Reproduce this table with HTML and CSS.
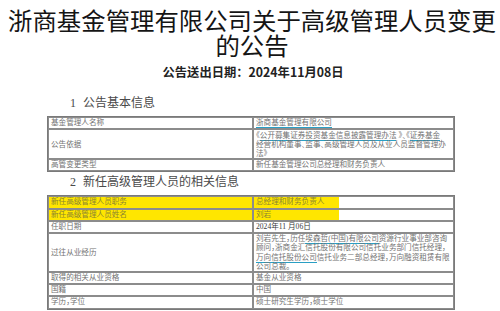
FILE: index.html
```html
<!DOCTYPE html>
<html lang="zh-CN">
<head>
<meta charset="utf-8">
<title>浙商基金管理有限公司关于高级管理人员变更的公告</title>
<link rel="stylesheet" href="styles.css">
</head>
<body>
<h1 class="title">浙商基金管理有限公司关于高级管理人员变更的公告</h1>
<p class="date">公告送出日期：2024年11月08日</p>

<section class="block">
  <h2 class="sec"><span class="num">1</span>公告基本信息</h2>
  <table class="grid">
    <colgroup><col class="c-label"><col></colgroup>
    <tr><td>基金管理人名称</td><td><span class="link">浙商基金管理有限公司</span></td></tr>
    <tr class="multi"><td>公告依据</td><td>《<span class="link">公开募集证券投资基金信息披露管理办法</span> 》、《<span class="link">证券基金</span><br>经营机构董事、监事、高级管理人员及从业人员监督管理办<br>法》</td></tr>
    <tr><td>高管变更类型</td><td>新任基金管理公司总经理和财务负责人</td></tr>
  </table>

  <h2 class="sec sec-2"><span class="num">2</span>新任高级管理人员的相关信息</h2>
  <table class="grid">
    <colgroup><col class="c-label"><col></colgroup>
    <tr class="hl"><td>新任高级管理人员职务</td><td class="hl-val"><div class="mark">总经理和财务负责人</div></td></tr>
    <tr class="hl"><td>新任高级管理人员姓名</td><td class="hl-val"><div class="mark">刘岩</div></td></tr>
    <tr><td>任职日期</td><td class="dark">2024年11 月06日</td></tr>
    <tr class="exp"><td>过往从业经历</td><td>刘岩先生，历任<span class="link">埃森哲(中国)有限公司</span>资源行业事业部咨询<br>顾问，浙商金汇信托股份有限公司信托业务部门信托经理，<br><span class="link">万向信托股份公司</span>信托业务二部总经理，万向融资租赁有限<br>公司总裁。</td></tr>
    <tr><td>取得的相关从业资格</td><td>基金从业资格</td></tr>
    <tr><td>国籍</td><td>中国</td></tr>
    <tr><td>学历，学位</td><td>硕士研究生学历，硕士学位</td></tr>
  </table>
</section>
</body>
</html>
```
FILE: styles.css
```css
body {
  margin: 0;
  background: #fff;
  font-family: "Noto Sans CJK SC", sans-serif;
}

.title {
  margin: 8px 3px 0 7px;
  font-size: 24.4px;
  line-height: 24.5px;
  font-weight: 400;
  text-align: center;
  color: #151515;
}

.date {
  margin: 7px 0 15px;
  padding-left: 6px;
  font-size: 12.3px;
  line-height: 16px;
  font-weight: 700;
  text-align: center;
  color: #222;
}

.block {
  width: 408px;
  margin-left: 47px;
}

.sec {
  margin: 0 0 5px;
  padding-left: 23px;
  font-family: "Liberation Serif", "Noto Sans CJK SC", serif;
  font-size: 12px;
  line-height: 16px;
  font-weight: 400;
  color: #4a4a4a;
}

.sec-2 {
  margin-top: 2px;
}

.num {
  margin-right: 7px;
}

.grid {
  width: 100%;
  table-layout: fixed;
  border: 1px solid #7a7a7a;
  border-spacing: 0;
  font-family: "Liberation Serif", "Noto Sans CJK SC", serif;
  font-size: 7.6px;
  font-feature-settings: "halt";
  color: #727272;
}

.c-label {
  width: 205px;
}

.grid td {
  border: 1px solid #8c8c8c;
  padding: 0 2px;
  line-height: 10.2px;
  white-space: nowrap;
  overflow: hidden;
  vertical-align: middle;
}

.grid .multi td {
  padding-top: 1px;
  line-height: 9px;
}

.grid .exp td {
  line-height: 9.25px;
}

.link {
  border-bottom: 1.5px solid #2a9fc4;
}

.hl td:first-child {
  background: #ffe600;
  color: #8c8530;
}

.grid .hl-val {
  padding: 0;
}

.mark {
  width: 85px;
  padding: 0 2px;
  box-sizing: border-box;
  background: #ffe600;
  color: #8c8530;
}

.dark {
  color: #3a3a3a;
}
```
